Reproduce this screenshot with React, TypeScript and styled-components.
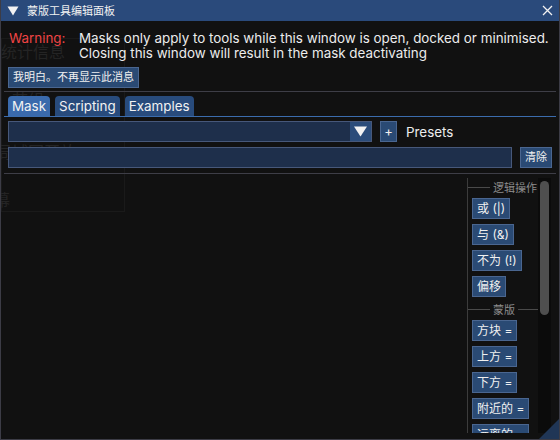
import React from "react";
import styled, { createGlobalStyle } from "styled-components";

const Global = createGlobalStyle`
  html, body { margin: 0; padding: 0; background: #0d0d0d; }
  body { font-family: Inter, "Noto Sans CJK SC", "Noto Sans", sans-serif; }
  * { box-sizing: border-box; }
`;

const Window = styled.div`
  position: relative;
  width: 560px;
  height: 440px;
  background: #111111;
  border: 1px solid #3c3c46;
  border-top: none;
  display: flex;
  flex-direction: column;
  overflow: hidden;
  color: #ececec;
  font-size: 13.4px;
`;

const Ghost = styled.div`
  position: absolute;
  left: 0;
  top: 38px;
  width: 124px;
  height: 174px;
  border: 1px solid #1a1a1a;
  color: #242424;
  font-family: "Noto Sans CJK SC", sans-serif;
  font-size: 16px;
  pointer-events: none;
`;

const GhostText = styled.div<{ $top: number; $left: number }>`
  position: absolute;
  top: ${(p) => p.$top}px;
  left: ${(p) => p.$left}px;
  white-space: nowrap;
`;

const TitleBar = styled.div`
  height: 21px;
  flex: none;
  background: #2a4a7b;
  display: flex;
  align-items: center;
  padding: 0 6px 0 6px;
  gap: 8px;
  font-family: "Noto Sans CJK SC", sans-serif;
  font-size: 11px;
  color: #f2f2f2;
  position: relative;
  z-index: 1;
`;

const TitleText = styled.span`
  flex: 1;
  line-height: 21px;
`;

const Body = styled.div`
  flex: 1;
  display: flex;
  flex-direction: column;
  padding: 10px 3px 0 3px;
  position: relative;
  z-index: 1;
  min-height: 0;
`;

const Inset = styled.div`
  padding: 0 4px;
`;

const WarningRow = styled.div`
  display: grid;
  grid-template-columns: 70px 1fr;
  line-height: 15px;
  padding-left: 1px;
  white-space: nowrap;
`;

const WarnLabel = styled.span`
  color: #ee4444;
`;

const Btn = styled.button<{ $fs?: number }>`
  height: 21px;
  padding: 0 4px;
  background: #2a4a74;
  border: 1px solid #4a6690;
  color: #f0f0f0;
  font-family: Inter, "Noto Sans CJK SC", sans-serif;
  font-size: ${(p) => p.$fs ?? 12}px;
  line-height: 19px;
  white-space: nowrap;
  cursor: pointer;
  display: inline-flex;
  align-items: center;
  justify-content: center;
`;

const Separator = styled.div<{ $mt: number }>`
  height: 1px;
  background: #3e3e47;
  margin-top: ${(p) => p.$mt}px;
`;

const TabBar = styled.div`
  display: flex;
  gap: 5px;
  margin-top: 4px;
  padding: 0 4px;
  border-bottom: 1px solid #3b6cad;
`;

const Tab = styled.div<{ $active?: boolean }>`
  height: 20px;
  padding: 0 4px;
  background: ${(p) => (p.$active ? "#3a6aac" : "#284b7c")};
  border-radius: 4px 4px 0 0;
  font-size: 13.4px;
  line-height: 20px;
  color: #f2f2f2;
`;

const Row = styled.div<{ $mt: number }>`
  display: flex;
  align-items: center;
  margin-top: ${(p) => p.$mt}px;
  padding: 0 4px;
`;

const Combo = styled.div`
  width: 364px;
  height: 21px;
  background: #1e2f4b;
  border: 1px solid #47587a;
  display: flex;
  justify-content: flex-end;
`;

const ComboArrow = styled.div`
  width: 21px;
  height: 19px;
  background: #2b4c7a;
  display: flex;
  align-items: center;
  justify-content: center;
`;

const Input = styled.div`
  width: 505px;
  height: 21px;
  background: #1e2f4b;
  border: 1px solid #47587a;
`;

const Presets = styled.span`
  margin-left: 9px;
`;

const Lower = styled.div`
  flex: 1;
  display: flex;
  justify-content: flex-end;
  padding: 4px 5px 6px 0;
  min-height: 0;
`;

const Sidebar = styled.div`
  width: 71px;
  border-left: 1px solid #3c3c3c;
  display: flex;
  flex-direction: column;
  overflow: hidden;
`;

const SectionHeader = styled.div`
  display: flex;
  align-items: center;
  height: 18px;
  margin-top: 1px;
  color: #8c8c8c;
  font-family: "Noto Sans CJK SC", sans-serif;
  font-size: 11px;
  gap: 3px;
  white-space: nowrap;
`;

const HeaderLine = styled.div<{ $w: number }>`
  height: 1px;
  width: ${(p) => p.$w}px;
  flex: none;
  background: #4a4a4a;
`;

const BtnList = styled.div`
  display: flex;
  flex-direction: column;
  align-items: flex-start;
  gap: 5px;
  padding-left: 4px;
  margin-top: 3px;
`;

const Scrollbar = styled.div`
  width: 13px;
  background: #0b0b0b;
  padding: 3px 2px;
  display: flex;
  flex-direction: column;
`;

const Grab = styled.div`
  height: 134px;
  background: #4f4f4f;
  border-radius: 5px;
`;

const Grip = styled.svg`
  position: absolute;
  right: 0;
  bottom: 0;
  z-index: 2;
`;

export default function App() {
  return (
    <>
      <Global />
      <Window>
        <Ghost>
          <GhostText $top={0} $left={-1}>统计信息</GhostText>
          <GhostText $top={48} $left={10}>节组</GhostText>
          <GhostText $top={100} $left={-6}>局域网开放</GhostText>
          <GhostText $top={148} $left={-8}>幕</GhostText>
        </Ghost>
        <TitleBar>
          <svg width="12" height="10" viewBox="0 0 12 10">
            <polygon points="0.5,0.5 11.5,0.5 6,9.5" fill="#f2f2f2" />
          </svg>
          <TitleText>蒙版工具编辑面板</TitleText>
          <svg width="11" height="11" viewBox="0 0 11 11">
            <path d="M1 1 L10 10 M10 1 L1 10" stroke="#f2f2f2" strokeWidth="1.3" />
          </svg>
        </TitleBar>
        <Body>
          <Inset>
            <WarningRow>
              <WarnLabel>Warning:</WarnLabel>
              <span>
                Masks only apply to tools while this window is open, docked or minimised.
                <br />
                Closing this window will result in the mask deactivating
              </span>
            </WarningRow>
            <Btn $fs={11} style={{ marginTop: 6 }}>我明白。不再显示此消息</Btn>
          </Inset>
          <Separator $mt={3} />
          <TabBar>
            <Tab $active>Mask</Tab>
            <Tab>Scripting</Tab>
            <Tab>Examples</Tab>
          </TabBar>
          <Row $mt={4}>
            <Combo>
              <ComboArrow>
                <svg width="13" height="11" viewBox="0 0 13 11">
                  <polygon points="0,0.5 13,0.5 6.5,10.5" fill="#f2f2f2" />
                </svg>
              </ComboArrow>
            </Combo>
            <Btn $fs={13} style={{ marginLeft: 8, width: 17 }}>+</Btn>
            <Presets>Presets</Presets>
          </Row>
          <Row $mt={5}>
            <Input />
            <Btn $fs={11} style={{ marginLeft: 8 }}>清除</Btn>
          </Row>
          <Separator $mt={5} />
          <Lower>
            <Sidebar>
              <SectionHeader>
                <HeaderLine $w={22} />
                逻辑操作
              </SectionHeader>
              <BtnList>
                <Btn>或 (|)</Btn>
                <Btn>与 (&amp;)</Btn>
                <Btn>不为 (!)</Btn>
                <Btn>偏移</Btn>
              </BtnList>
              <SectionHeader style={{ marginTop: 4 }}>
                <HeaderLine $w={22} />
                蒙版
                <HeaderLine $w={20} />
              </SectionHeader>
              <BtnList>
                <Btn>方块 =</Btn>
                <Btn>上方 =</Btn>
                <Btn>下方 =</Btn>
                <Btn>附近的 =</Btn>
                <Btn>远离的 =</Btn>
              </BtnList>
            </Sidebar>
            <Scrollbar>
              <Grab />
            </Scrollbar>
          </Lower>
        </Body>
        <Grip width="20" height="20" viewBox="0 0 20 20">
          <polygon points="20,0 20,20 0,20" fill="#203656" />
        </Grip>
      </Window>
    </>
  );
}
